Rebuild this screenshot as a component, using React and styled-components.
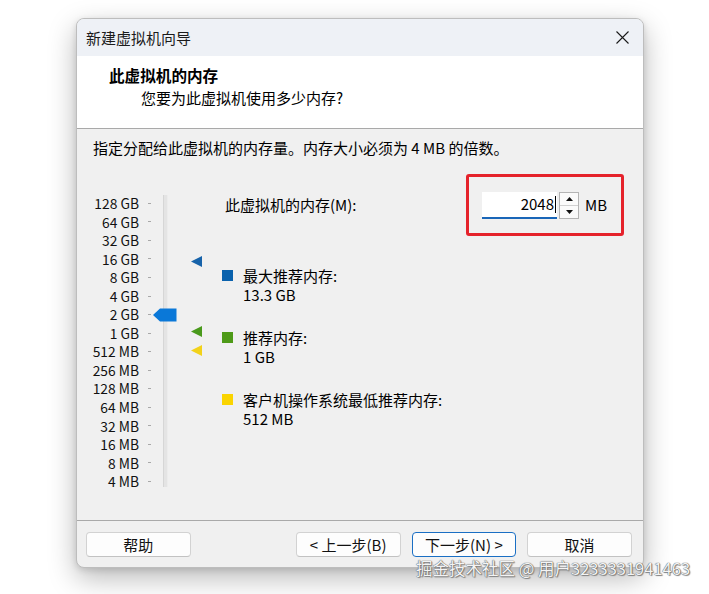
import React from "react";
import styled, { createGlobalStyle } from "styled-components";

const GlobalStyle = createGlobalStyle`
  html, body { margin: 0; padding: 0; background: #ffffff; }
  body { font-family: "Noto Sans CJK SC", "Liberation Sans", sans-serif; color: #1a1a1a; }
  * { box-sizing: border-box; }
`;

const Page = styled.div`
  position: relative;
  width: 709px;
  height: 594px;
  padding: 18px 0 0 76px;
  overflow: hidden;
  background: #ffffff;
`;

const Dialog = styled.div`
  width: 568px;
  height: 550px;
  display: flex;
  flex-direction: column;
  border: 1px solid #bdbdbd;
  border-radius: 8px;
  overflow: hidden;
  background: #f0f0f0;
  box-shadow: 0 10px 28px rgba(0, 0, 0, 0.28), 0 2px 6px rgba(0, 0, 0, 0.12);
`;

const TitleBar = styled.div`
  height: 37px;
  flex: none;
  display: flex;
  align-items: center;
  justify-content: space-between;
  padding: 0 14px 0 9px;
  background: #eef1f6;
  font-size: 15px;
  line-height: 20px;
  color: #1b1b1b;
`;

const CloseButton = styled.div`
  width: 14px;
  height: 14px;
  display: flex;
  align-items: center;
  justify-content: center;
`;

const Header = styled.div`
  height: 73px;
  flex: none;
  background: #ffffff;
  border-bottom: 1px solid #a9a9a9;
  padding: 8px 0 0 32px;
`;

const HeaderTitle = styled.div`
  font-size: 15.6px;
  font-weight: 700;
  line-height: 22px;
  color: #000;
`;

const HeaderSub = styled.div`
  margin-top: 2px;
  padding-left: 32px;
  font-size: 15px;
  line-height: 20px;
  color: #000;
`;

const Body = styled.div`
  flex: 1;
  padding: 9px 19px 0 16px;
  font-size: 15px;
  color: #000;
`;

const Intro = styled.div`
  line-height: 20px;
`;

const MainRow = styled.div`
  display: flex;
  align-items: flex-start;
  margin-top: 16px;
`;

const SliderArea = styled.div`
  display: flex;
  align-items: flex-start;
  padding-top: 20px;
`;

const ScaleLabels = styled.div`
  width: 46px;
  display: flex;
  flex-direction: column;
  align-items: flex-end;
`;

const ScaleLabel = styled.div`
  height: 18.55px;
  line-height: 18.55px;
  font-size: 13.8px;
  white-space: nowrap;
  color: #111;
`;

const Ticks = styled.div`
  width: 3px;
  margin-left: 9px;
  display: flex;
  flex-direction: column;
`;

const Tick = styled.div`
  height: 18.55px;
  display: flex;
  align-items: center;
  &::after {
    content: "";
    width: 3px;
    height: 1px;
    background: #a8a8a8;
  }
`;

const TrackWrap = styled.div`
  position: relative;
  width: 59px;
  margin-left: 12px;
  height: 297px;
`;

const Track = styled.div`
  width: 5px;
  height: 292px;
  margin-top: 1px;
  background: #e4e4e4;
  border-left: 1px solid #d6d6d6;
  border-right: 1px solid #ececec;
`;

const Thumb = styled.svg`
  position: absolute;
  left: -10px;
  top: 114px;
`;

const Marker = styled.svg`
  position: absolute;
  left: 28px;
  top: ${(p) => p.$top}px;
`;

const RightPanel = styled.div`
  flex: 1;
  display: flex;
  flex-direction: column;
`;

const MemoryRow = styled.div`
  display: flex;
  align-items: center;
  justify-content: space-between;
  padding-left: 3px;
`;

const FieldLabel = styled.div`
  line-height: 20px;
`;

const RedFrame = styled.div`
  width: 158px;
  height: 62px;
  border: 3px solid #e5222b;
  border-radius: 3px;
  display: flex;
  align-items: center;
  padding-left: 13px;
`;

const Input = styled.div`
  width: 75px;
  height: 27px;
  background: #ffffff;
  border-bottom: 2px solid #1a66b8;
  display: flex;
  align-items: center;
  justify-content: flex-end;
  padding-right: 1px;
  font-size: 15px;
  line-height: 20px;
`;

const Caret = styled.span`
  display: inline-block;
  width: 1px;
  height: 17px;
  background: #000;
  margin-left: 1px;
`;

const Spinner = styled.div`
  width: 20px;
  height: 27px;
  margin-left: 2px;
  display: flex;
  flex-direction: column;
  border: 1px solid #b4b4b4;
  background: #fafafa;
`;

const SpinHalf = styled.div`
  flex: 1;
  display: flex;
  align-items: center;
  justify-content: center;
  border-top: ${(p) => (p.$bottom ? "1px solid #d0d0d0" : "none")};
`;

const Unit = styled.div`
  margin-left: 6px;
  line-height: 20px;
`;

const Legend = styled.div`
  display: flex;
  flex-direction: column;
  gap: 24px;
  margin-top: 30px;
`;

const LegendItem = styled.div`
  display: flex;
  align-items: flex-start;
`;

const Swatch = styled.div`
  width: 11px;
  height: 11px;
  margin-top: 4px;
  flex: none;
  background: ${(p) => p.$color};
`;

const LegendText = styled.div`
  margin-left: 10px;
  line-height: 19px;
`;

const Footer = styled.div`
  height: 47px;
  flex: none;
  border-top: 1px solid #a9a9a9;
  padding: 11px 11px 0 9px;
  display: flex;
  align-items: flex-start;
`;

const Button = styled.div`
  width: 105px;
  height: 25px;
  border: 1px solid ${(p) => (p.$primary ? "#1a6fc4" : "#d2d2d2")};
  border-bottom-color: ${(p) => (p.$primary ? "#1a6fc4" : "#c2c2c2")};
  border-radius: 4px;
  background: #fdfdfd;
  display: flex;
  align-items: center;
  justify-content: center;
  font-size: 15px;
  line-height: 20px;
  color: #111;
  margin-left: ${(p) => p.$ml || 0}px;
`;

const Watermark = styled.div`
  position: absolute;
  left: 416px;
  top: 557px;
  font-size: 16.5px;
  line-height: 22px;
  color: #f4f4f4;
  white-space: nowrap;
  text-shadow: 0 0 1px #5a5a5a, 0 0 1px #5a5a5a, 1px 1px 1px #888;
`;

const scale = [
  "128 GB", "64 GB", "32 GB", "16 GB", "8 GB", "4 GB", "2 GB", "1 GB",
  "512 MB", "256 MB", "128 MB", "64 MB", "32 MB", "16 MB", "8 MB", "4 MB",
];

const markers = [
  { top: 62, color: "#1763aa" },
  { top: 132, color: "#4a9a1c" },
  { top: 151, color: "#f2d21a" },
];

const legend = [
  { color: "#0a62ad", title: "最大推荐内存:", value: "13.3 GB" },
  { color: "#4e9a18", title: "推荐内存:", value: "1 GB" },
  { color: "#fad400", title: "客户机操作系统最低推荐内存:", value: "512 MB" },
];

export default function App() {
  return (
    <>
      <GlobalStyle />
      <Page>
        <Dialog>
          <TitleBar>
            <span>新建虚拟机向导</span>
            <CloseButton>
              <svg width="13" height="13" viewBox="0 0 13 13">
                <path d="M0.5 0.5 L12.5 12.5 M12.5 0.5 L0.5 12.5" stroke="#1a1a1a" strokeWidth="1.1" fill="none" />
              </svg>
            </CloseButton>
          </TitleBar>
          <Header>
            <HeaderTitle>此虚拟机的内存</HeaderTitle>
            <HeaderSub>您要为此虚拟机使用多少内存?</HeaderSub>
          </Header>
          <Body>
            <Intro>指定分配给此虚拟机的内存量。内存大小必须为 4 MB 的倍数。</Intro>
            <MainRow>
              <SliderArea>
                <ScaleLabels>
                  {scale.map((s) => (
                    <ScaleLabel key={s}>{s}</ScaleLabel>
                  ))}
                </ScaleLabels>
                <Ticks>
                  {scale.map((s) => (
                    <Tick key={s} />
                  ))}
                </Ticks>
                <TrackWrap>
                  <Track />
                  <Thumb width="24" height="14" viewBox="0 0 24 14">
                    <polygon points="0,7 7,0.5 23.5,0.5 23.5,13.5 7,13.5" fill="#0a78d8" />
                  </Thumb>
                  {markers.map((m) => (
                    <Marker key={m.top} $top={m.top} width="11" height="11" viewBox="0 0 11 11">
                      <polygon points="0,5.5 11,0 11,11" fill={m.color} />
                    </Marker>
                  ))}
                </TrackWrap>
              </SliderArea>
              <RightPanel>
                <MemoryRow>
                  <FieldLabel>此虚拟机的内存(M):</FieldLabel>
                  <RedFrame>
                    <Input>
                      2048
                      <Caret />
                    </Input>
                    <Spinner>
                      <SpinHalf>
                        <svg width="7" height="4" viewBox="0 0 7 4">
                          <polygon points="0,4 3.5,0 7,4" fill="#111" />
                        </svg>
                      </SpinHalf>
                      <SpinHalf $bottom>
                        <svg width="7" height="4" viewBox="0 0 7 4">
                          <polygon points="0,0 7,0 3.5,4" fill="#111" />
                        </svg>
                      </SpinHalf>
                    </Spinner>
                    <Unit>MB</Unit>
                  </RedFrame>
                </MemoryRow>
                <Legend>
                  {legend.map((l) => (
                    <LegendItem key={l.title}>
                      <Swatch $color={l.color} />
                      <LegendText>
                        <div>{l.title}</div>
                        <div>{l.value}</div>
                      </LegendText>
                    </LegendItem>
                  ))}
                </Legend>
              </RightPanel>
            </MainRow>
          </Body>
          <Footer>
            <Button>帮助</Button>
            <Button $ml={105}>&lt; 上一步(B)</Button>
            <Button $ml={11} $primary>下一步(N) &gt;</Button>
            <Button $ml={11}>取消</Button>
          </Footer>
        </Dialog>
        <Watermark>掘金技术社区 @ 用户3233331941463</Watermark>
      </Page>
    </>
  );
}
